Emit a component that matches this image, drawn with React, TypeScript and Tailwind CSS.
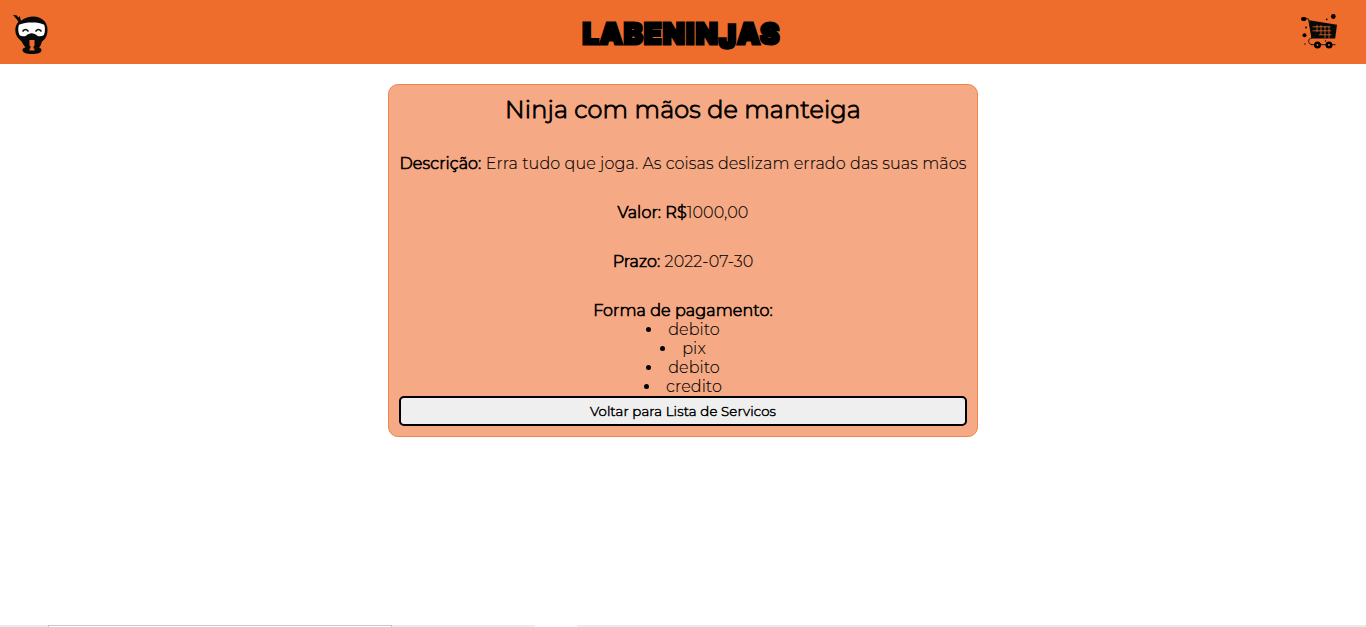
import React from 'react';

const payments = ['debito', 'pix', 'debito', 'credito'];

function NinjaIcon() {
  return (
    <svg width="36" height="40" viewBox="0 0 36 40" aria-hidden="true">
      <path d="M0 1l3.500 .2 2 2.500 1-2 1.500 5C12 3.500 16 2.500 20.500 2.500c8 0 14 5.500 14 13 0 6-2 9.500-5.500 12-1 3-1.500 5-3 6 1.500.5 2.500 1.300 2.500 2.500 0 3-4 4-9.500 4s-9.500-1.200-9.500-4c0-1.200 1.500-2.200 3-2.700-2-2-3-4-4-6C5 24.500 2.300 21 2.300 16c0-3 1-6 3.200-8.300L3.500 5z" fill="#080a09" />
      <path d="M6 10.800c4-1.600 8-2.200 13-2.200s9 .6 12.200 2.200c1.200 3 1 8-.5 10.500-2 1-4.500 1.200-6 .7-2-2-4-2.800-6-2.800s-4 .8-6 2.800c-2 .5-4.500.2-6-.8C5.200 19 4.800 14 6 10.800z" fill="#fff" />
      <path d="M9.500 17.500q3-4 6 0M22.500 17.500q3-4 6 0" fill="none" stroke="#111" strokeWidth="1.500" />
      <path d="M16.500 26h5v5.500l-1 1v1.500l1 1v1.500h-5V35l1-1v-1.500l-1-1z" fill="#ee6d2c" />
    </svg>
  );
}

function CartIcon() {
  return (
    <svg width="38" height="36" viewBox="0 0 38 36" aria-hidden="true">
      <rect x="1" y="3" width="5.500" height="4" rx="2" />
      <path d="M6 4.500l2.500.5L12 24M12 24c-4.500 0-4.500 6.500 0 6.500M11 30.700h24.500" fill="none" stroke="#090909" strokeWidth=".9" />
      <path d="M9 6.200l28 4.600-1.800 13.800H11.500z" fill="#080909" />
      <path d="M12.500 12.800h18M12.500 16.800h18.500M19 20.800h12.500M17 11v7M21 11v10M25 12v12M29 12.500v12" fill="none" stroke="#ee6d2c" strokeWidth=".75" />
      <circle cx="17.500" cy="31" r="3.500" /><circle cx="29" cy="31" r="3.500" />
      <circle cx="17.500" cy="31" r=".9" fill="#ee6d2c" /><circle cx="29" cy="31" r=".9" fill="#ee6d2c" />
      <circle cx="33.300" cy="2.500" r="2.400" /><circle cx="4.500" cy="21.300" r="2" />
      <circle cx="26.700" cy="5.300" r=".9" /><circle cx="6" cy="13.500" r=".9" />
      <circle cx="5" cy="30" r=".7" /><circle cx="25.500" cy="27" r=".7" />
    </svg>
  );
}

export default function App() {
  return (
    <div className="flex h-[627px] flex-col overflow-hidden bg-white font-[Montserrat,Inter,'Liberation_Sans',sans-serif] text-base leading-[19px] font-light tracking-[0.1px] text-black">
      <header className="flex h-16 shrink-0 items-center justify-between bg-[#ee6d2c] pr-[28px] pl-[13px]">
        <div className="flex w-[50px] pt-[3px]"><NinjaIcon /></div>
        <h1 className="pt-[4px] font-[Inter,sans-serif] text-[28.500px] leading-[40px] font-black tracking-[1.3px] whitespace-nowrap [-webkit-text-stroke:3px_black]">LABENIN<span className="inline-block origin-top scale-y-[1.12]">J</span>AS</h1>
        <div className="flex w-[38px]"><CartIcon /></div>
      </header>
      <main className="flex flex-1 items-start justify-center pt-5">
        <section className="flex h-[353px] w-[590px] flex-col items-center rounded-[10px] border border-[#ef8452] bg-[#f5a984] px-[10px] pt-[10px] whitespace-nowrap [-webkit-text-stroke:0.12px_black]">
          <h2 className="h-[29px] text-[24px] leading-[29px] tracking-[0.12px] [-webkit-text-stroke:0.9px_black]">Ninja com mãos de manteiga</h2>
          <p className="mt-[30px]"><b className="font-light [-webkit-text-stroke:0.7px_black]">Descrição:</b> Erra tudo que joga. As coisas deslizam errado das suas mãos</p>
          <p className="mt-[30px]"><b className="font-light [-webkit-text-stroke:0.7px_black]">Valor: R$</b>1000,00</p>
          <p className="mt-[30px]"><b className="font-light [-webkit-text-stroke:0.7px_black]">Prazo:</b> 2022-07-30</p>
          <p className="mt-[30px] [-webkit-text-stroke:0.7px_black]">Forma de pagamento:</p>
          <ul className="flex flex-col items-center">
            {payments.map((name, index) => (
              <li key={index} className="flex h-[19px] items-center gap-[17px]">
                <span className="size-[5px] rounded-full bg-black" />
                <span>{name}</span>
              </li>
            ))}
          </ul>
          <button className="h-[30px] w-[568px] rounded-[5px] border-2 border-black bg-[#efefef] text-[13.333px] leading-[16px] tracking-[0.13px] [-webkit-text-stroke:0.5px_black]">Voltar para Lista de Servicos</button>
        </section>
      </main>
      <footer className="flex h-[2px] shrink-0 bg-[#ebebeb]">
        <div className="ml-12 h-[2px] w-[344px] border-x border-t border-[#c8c8c8] bg-white" />
        <div className="ml-[143px] h-[2px] w-[42px] bg-[#fafafa]" />
      </footer>
    </div>
  );
}
